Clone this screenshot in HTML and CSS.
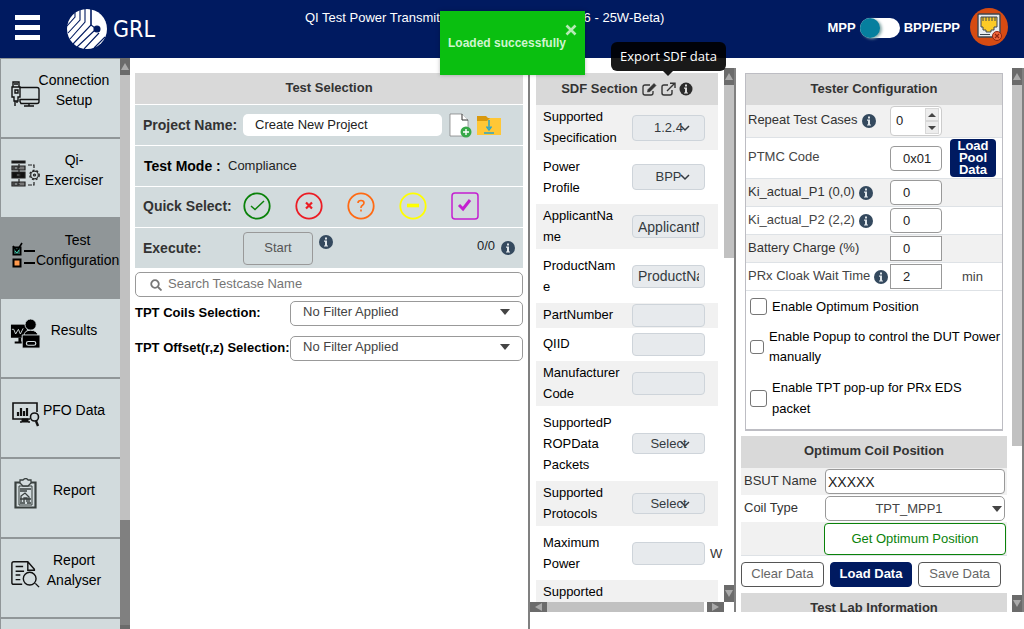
FILE: index.html
```
<!DOCTYPE html>
<html lang="en">
<head>
<meta charset="utf-8">
<title>GRL - Test Configuration</title>
<link rel="stylesheet" href="styles.css">
</head>
<body>
<svg width="0" height="0" class="defs" aria-hidden="true">
  <symbol id="info" viewBox="0 0 14 14"><circle cx="7" cy="7" r="7" fill="#34495e"/><path d="M6 2.500h2v2H6zM5 5.600h3v4.800h1v1.100H5v-1.100h1V6.700H5z" fill="#dfe6ea"/></symbol>
  <symbol id="chevron" viewBox="0 0 10 8"><path d="M1 2l4 4 4-4" fill="none" stroke="#343a40" stroke-width="1.500"/></symbol>
  <symbol id="caret" viewBox="0 0 10 6"><path d="M0 0h10L5 6z" fill="#444"/></symbol>
</svg>
<header class="topbar">
  <button class="menu" aria-label="Menu"><i></i><i></i><i></i></button>
  <div class="logo">
    <svg width="40" height="40" viewBox="0 0 40 40" aria-hidden="true">
      <circle cx="20" cy="20" r="20" fill="#fff"/>
      <g fill="none" stroke="#001a60" stroke-width="1.100"><path d="M8 3v5L0 17M13 1v10L1 24M18 0v13L3 30M24 0v16L6 35M28 21L10 38M32 24L17 40M38 28L27 39"/><path d="M24 0v16l4 3"/><circle cx="30" cy="20" r="3" fill="#001a60"/></g>
    </svg>
    <span class="logo-text">GRL</span>
  </div>
  <div class="app-title">QI Test Power Transmitter (GRL-C3) Version : 1.6 - 25W-Beta)</div>
  <div class="mode"><span>MPP</span><button class="toggle" role="switch" aria-checked="false" aria-label="MPP or BPP/EPP"><i></i></button><span>BPP/EPP</span></div>
  <svg class="lan" width="38" height="38" viewBox="0 0 38 38" role="img" aria-label="Disconnected"><circle cx="19" cy="19" r="19" fill="#d64b12"/><rect x="8" y="6" width="22" height="23" rx="1" fill="#e9edf0" stroke="#3c4650" stroke-width="1.400"/><path d="M11 9h16v10h-3v3h-3v2h-5v-2h-3v-3h-2z" fill="#fccb25" stroke="#3c4650"/><path d="M13 9v4M16 9v4M19 9v4M22 9v4M25 9v4" stroke="#3c4650"/><path d="M10 26.500h10" stroke="#3c4650"/><circle cx="27" cy="28" r="4.500" fill="#f2683c" stroke="#8c2410"/><path d="M25 26l4 4M29 26l-4 4" stroke="#8c2410" stroke-width="1.200"/></svg>
</header>
<div class="body">
  <nav class="sidebar">
    <a class="nav" href="#connection"><svg width="30" height="28" viewBox="0 0 30 28" fill="none" stroke="#111" stroke-width="1.400"><path d="M2 7h8v10H8v4H4v-4H2zM3 7V2h6v5M4 4h4M5 10h3v3H5zM5 21v5M7 21v2"/><path d="M10 7.500h17q2 0 2 2v12q0 2-2 2H11l-1-2v-2h19M19 23v3M14 26h10"/></svg><span>Connection Setup</span></a>
    <a class="nav" href="#exerciser"><svg width="30" height="28" viewBox="0 0 30 28" fill="none" stroke="#222" stroke-width="1.200"><path d="M2 1h13v2H2zM2 12h13v6H2z" fill="#111"/><path d="M2 6h13v4H2zM2 22h13v4H2z" fill="#777"/><path d="M4 7h4v2H4zM4 23h4v2H4zM7 14h3v2H7z" fill="#d2dbdd"/><path d="M9 4v21M18 5h6v4M18 25h6v-4" stroke-dasharray="4 1"/><circle cx="24.500" cy="15" r="3.800"/><circle cx="24.500" cy="15" r="4.800" stroke-dasharray="2 2"/><circle cx="24.500" cy="15" r="1"/></svg><span>Qi-Exerciser</span></a>
    <a class="nav active" href="#test" aria-current="page"><svg width="30" height="28" viewBox="0 0 30 28"><path d="M3.500 7.500h7v7h-7zM3.500 19.500h7v7h-7z" fill="#ff9a4d" stroke="#000" stroke-width="2"/><path d="M4 8h6v6H4z" fill="#274f49"/><path d="M3 6l4 5 5-8" stroke="#000" stroke-width="1.600" fill="none"/><path d="M5 11l2 2 2-3" stroke="#3bd0b0" fill="none"/><path d="M14 11h11M14 23h11" stroke="#000" stroke-width="1.800"/></svg><span>Test Configuration</span></a>
    <a class="nav" href="#results"><svg width="32" height="32" viewBox="0 0 32 32"><path d="M1 6h17v14H1z"/><path d="M9 20h3v4h3v2H5v-2h4z"/><path d="M2 11h2l2 5 3-5 2 5 3-6" stroke="#cdd6d8" fill="none"/><g stroke="#d2dbdd"><circle cx="22" cy="6" r="6"/><path d="M15 18q0-6 7-6t8 6z"/><path d="M13 17h19v14H13z"/></g><rect x="17.500" y="24" width="10" height="4" rx="2" fill="none" stroke="#d2dbdd" stroke-width="1.300"/></svg><span>Results</span></a>
    <a class="nav" href="#pfo"><svg width="30" height="28" viewBox="0 0 30 28" fill="none" stroke="#111" stroke-width="1.600"><path d="M20 19H3V3h24v9"/><path d="M8 16v-4M11 16V8M14 16v-5M17 16V8" stroke-width="2.200"/><path d="M12 19h6v3h2H10h2z" fill="#111" stroke-width="1"/><circle cx="24.500" cy="17" r="4"/><path d="M26 21l2 5" stroke-width="2.400"/></svg><span>PFO Data</span></a>
    <a class="nav" href="#report"><svg width="30" height="32" viewBox="0 0 30 32" fill="none" stroke="#39403f"><path d="M5.500 4.500h20v25h-20z" stroke-width="2.200"/><path d="M9 8h13v19H9z"/><path d="M10 2h3q3-3 5 0h3v3l-3 3h-5l-3-3z" fill="#d2dbdd" stroke-width="1.300"/><path d="M10 11h11M10 13h7M11 24V18l4-3 4 4v5M14 24v-4h3v4M10 21h11M10 25h5M17 25h4" stroke-width="1.300"/></svg><span>Report</span></a>
    <a class="nav" href="#analyser"><svg width="32" height="30" viewBox="0 0 32 30" fill="none" stroke="#111" stroke-width="1.500"><path d="M13 26H4q-2 0-2-2V4q0-2 2-2h15l7 8v1h-7V2M6 7h8M6 12h9M6 16h5M6 21h5"/><circle cx="21" cy="20" r="6.800"/><path d="M27 25l4 4"/></svg><span>Report Analyser</span></a>
    <a class="nav" href="#more" aria-label="More"></a>
  </nav>
  <div class="vbar side-bar" aria-hidden="true"><i class="arr up"></i><i class="thumb"></i><i class="rest"></i><i class="arr down"></i></div>

  <main class="tests">
    <section class="panel">
      <h2>Test Selection</h2>
      <div class="prow"><label class="plabel" for="project">Project Name:</label><input id="project" class="project" value="Create New Project">
        <button class="bare" aria-label="New project"><svg width="23" height="25" viewBox="0 0 23 25"><path d="M1 1h12l6 6v16H1z" fill="#fff" stroke="#777" stroke-width=".7"/><path d="M13 1v6h6" fill="#fff" stroke="#333"/><circle cx="17" cy="19" r="5.500" fill="#37a849"/><path d="M17 16v6M14 19h6" stroke="#fff" stroke-width="1.400"/></svg></button>
        <button class="bare folder" aria-label="Load project"><svg width="24" height="21" viewBox="0 0 24 21"><path d="M0 1h9l2 2h13v5H0z" fill="#d9980d"/><path d="M0 6h10l3-3h11v17H0z" fill="#ffc736"/><path d="M12 5v8M9.500 11.500L12 15l2.500-3.500M7 18h10" fill="none" stroke="#2aa5c9" stroke-width="1.500"/></svg></button></div>
      <div class="prow"><span class="plabel black">Test Mode :</span><span class="mode-value">Compliance</span></div>
      <div class="prow quick"><span class="plabel">Quick Select:</span>
        <button class="bare" aria-label="Passed"><svg width="28" height="28" viewBox="0 0 28 28" fill="none" stroke="#0a820a"><circle cx="14" cy="14" r="12.700" stroke-width="1.800"/><path d="M8 14l4 3.500L21 9" stroke-width="1.500"/></svg></button>
        <button class="bare" aria-label="Failed"><svg width="28" height="28" viewBox="0 0 28 28" fill="none" stroke="#ec1c24"><circle cx="14" cy="14" r="12.700" stroke-width="1.800"/><path d="M11 10.500l6 6M17 10.500l-6 6" stroke-width="2.200"/></svg></button>
        <button class="bare" aria-label="Inconclusive"><svg width="28" height="28" viewBox="0 0 28 28" fill="none" stroke="#ff6a13"><circle cx="14" cy="14" r="12.700" stroke-width="1.800"/><path d="M11 11q0-2.500 3-2.500t3 2.500q0 1.300-1.500 2.200T14 15.500v.5M14 17.500v2" stroke-width="1.600"/></svg></button>
        <button class="bare" aria-label="Not run"><svg width="28" height="28" viewBox="0 0 28 28" fill="none" stroke="#ff0"><circle cx="14" cy="14" r="12.700" stroke-width="1.800"/><path d="M8 13.500h12" stroke-width="3.600"/></svg></button>
        <button class="bare" aria-label="All"><svg width="28" height="28" viewBox="0 0 28 28" fill="none" stroke="#c41fd0"><rect x="1" y="1" width="26" height="26" rx="3" stroke-width="1.500"/><path d="M8 13l4 4 7-9" stroke-width="3"/></svg></button></div>
      <div class="prow"><span class="plabel">Execute:</span><button class="start">Start</button><svg class="info raise"><use href="#info"/></svg><span class="count">0/0</span><svg class="info"><use href="#info"/></svg></div>
    </section>
    <label class="search"><svg width="12" height="12" viewBox="0 0 12 12" fill="none" stroke="#777" stroke-width="1.800"><circle cx="5" cy="5" r="3.800"/><path d="M8 8l3.500 3.500"/></svg><input type="search" placeholder="Search Testcase Name" aria-label="Search Testcase Name"></label>
    <div class="filter"><label for="coils">TPT Coils Selection:</label><span class="dd"><select id="coils"><option>No Filter Applied</option></select><svg width="10" height="6"><use href="#caret"/></svg></span></div>
    <div class="filter"><label for="offset">TPT Offset(r,z) Selection:</label><span class="dd"><select id="offset"><option>No Filter Applied</option></select><svg width="10" height="6"><use href="#caret"/></svg></span></div>
  </main>

  <section class="sdf">
    <div class="scroll-row">
      <div class="sdf-view">
        <div class="sdf-table">
          <h2>SDF Section
            <button class="bare" aria-label="Edit SDF data"><svg width="16" height="14" viewBox="0 0 16 14" fill="none" stroke="#333" stroke-width="1.300"><path d="M9 3H4Q2 3 2 5v6q0 2 2 2h6q2 0 2-2V9"/><path d="M6.500 10l.5-2.500 6-6 2 2-6 6z" fill="#333" stroke-width=".6"/></svg></button>
            <button class="bare" aria-label="Export SDF data"><svg width="16" height="14" viewBox="0 0 16 14" fill="none" stroke="#333" stroke-width="1.400"><path d="M8 3H4Q2 3 2 5v6q0 2 2 2h6q2 0 2-2V8M7 9l7-7M10 1.200h5V6" /></svg></button>
            <svg width="14" height="14" viewBox="0 0 14 14"><circle cx="7" cy="7" r="6.500" fill="#2b2b2b"/><path d="M6 2.500h2v2H6zM5 5.600h3v4.800h1v1.100H5v-1.100h1V6.700H5z" fill="#ddd"/></svg>
          </h2>
          <div class="srow"><label for="s1">Supported Specification</label><span class="pick mid"><select id="s1"><option>1.2.4</option></select><svg width="10" height="8"><use href="#chevron"/></svg></span></div>
          <div class="srow tall"><label for="s2">Power<br>Profile</label><span class="pick mid"><select id="s2"><option>BPP</option></select><svg width="10" height="8"><use href="#chevron"/></svg></span></div>
          <div class="srow"><label for="s3">ApplicantName</label><input id="s3" value="ApplicantName"></div>
          <div class="srow tall"><label for="s4">ProductName</label><input id="s4" value="ProductName"></div>
          <div class="srow one"><label for="s5">PartNumber</label><input id="s5"></div>
          <div class="srow one even"><label for="s6">QIID</label><input id="s6"></div>
          <div class="srow"><label for="s7">Manufacturer Code</label><input id="s7"></div>
          <div class="srow tall"><label for="s8">SupportedPROPData Packets</label><span class="pick"><select id="s8"><option>Select</option></select><svg width="10" height="8"><use href="#chevron"/></svg></span></div>
          <div class="srow"><label for="s9">Supported Protocols</label><span class="pick"><select id="s9"><option>Select</option></select><svg width="10" height="8"><use href="#chevron"/></svg></span></div>
          <div class="srow tall"><label for="s10">Maximum Power</label><input id="s10"><span class="unit">W</span></div>
          <div class="srow"><span class="lab">Supported</span></div>
        </div>
      </div>
      <div class="vbar sdf-bar" aria-hidden="true"><i class="arr up"></i><i class="thumb"></i><i class="rest"></i><i class="arr down"></i></div>
    </div>
    <div class="hbar" aria-hidden="true"><i class="arr left"></i><i class="thumb"></i><i class="arr right"></i></div>
  </section>

  <section class="config">
    <div class="config-view">
      <div class="tester">
        <h2>Tester Configuration</h2>
        <div class="trow"><span class="tl"><label for="rep">Repeat Test Cases</label><svg class="info"><use href="#info"/></svg></span><span class="spin"><input id="rep" value="0"><span class="steps"><button aria-label="Increase"><svg width="8" height="4" viewBox="0 0 8 4"><path d="M0 4h8L4 0z" fill="#444"/></svg></button><button aria-label="Decrease"><svg width="8" height="4" viewBox="0 0 8 4"><path d="M0 0h8L4 4z" fill="#444"/></svg></button></span></span></div>
        <div class="trow"><span class="tl"><label for="ptmc">PTMC Code</label></span><input id="ptmc" value="0x01"><button class="pool">Load Pool Data</button></div>
        <div class="trow"><span class="tl"><label for="k1">Ki_actual_P1 (0,0)</label><svg class="info"><use href="#info"/></svg></span><input id="k1" value="0"></div>
        <div class="trow"><span class="tl"><label for="k2">Ki_actual_P2 (2,2)</label><svg class="info"><use href="#info"/></svg></span><input id="k2" value="0"></div>
        <div class="trow"><span class="tl"><label for="bat">Battery Charge (%)</label></span><input id="bat" class="square" value="0"></div>
        <div class="trow"><span class="tl"><label for="prx">PRx Cloak Wait Time</label><svg class="info"><use href="#info"/></svg></span><input id="prx" class="square" value="2"><span class="min">min</span></div>
        <div class="checks">
          <label><input type="checkbox"><span>Enable Optimum Position</span></label>
          <label class="small"><input type="checkbox"><span>Enable Popup to control the DUT Power manually</span></label>
          <label><input type="checkbox"><span>Enable TPT pop-up for PRx EDS packet</span></label>
        </div>
      </div>
      <div class="coil">
        <h2>Optimum Coil Position</h2>
        <div class="crow"><label for="bsut">BSUT Name</label><input id="bsut" value="XXXXX"></div>
        <div class="crow"><label for="ctype">Coil Type</label><span class="dd"><select id="ctype"><option>TPT_MPP1</option></select><svg width="10" height="6"><use href="#caret"/></svg></span></div>
        <div class="crow last"><button class="get">Get Optimum Position</button></div>
      </div>
      <div class="actions"><button>Clear Data</button><button class="primary">Load Data</button><button>Save Data</button></div>
      <h2>Test Lab Information</h2>
    </div>
    <div class="vbar config-bar" aria-hidden="true"><i class="arr up"></i><i class="thumb"></i><i class="rest"></i><i class="arr down"></i></div>
  </section>
</div>
<div class="toast" role="status"><span>Loaded successfully</span><button aria-label="Close"><svg width="12" height="12" viewBox="0 0 12 12"><path d="M1.500 1.500l9 9M10.500 1.500l-9 9" stroke="#b5eab5" stroke-width="2.600"/></svg></button></div>
<div class="tooltip" role="tooltip">Export SDF data</div>
</body>
</html>
```

FILE: styles.css
```
* { box-sizing: border-box; }
body { margin: 0; height: 100vh; overflow: hidden; display: flex; flex-direction: column; background: #fff; color: #212529; font: 13px/20px "Liberation Sans", Arial, sans-serif; }
input, select, button { font: inherit; color: inherit; margin: 0; padding: 0; }
select { appearance: none; }
h2 { margin: 0; height: 31px; background: #d9d9d9; color: #333; font-size: 13px; line-height: 30px; font-weight: bold; text-align: center; }
svg { display: block; flex: none; }
.defs { position: absolute; }
.bare { border: 0; background: none; }
.info { width: 14px; height: 14px; }

.topbar { height: 58px; flex: none; display: flex; align-items: flex-start; background: #001a60; color: #fff; padding: 8px 16px 0 15px; }
.menu { width: 25px; border: 0; background: none; display: grid; gap: 5px; margin: 7px 27px 0 0; }
.menu i { height: 5px; background: #fff; }
.logo { display: flex; align-items: center; gap: 6px; padding-top: 1px; }
.logo-text { font: 23px/40px "Liberation Sans Narrow", "DejaVu Sans Condensed", sans-serif; width: 42px; }
.app-title { margin-left: 150px; white-space: nowrap; }
.mode { margin-left: auto; display: flex; align-items: center; gap: 4px; font-weight: bold; padding-top: 10px; }
.toggle { width: 40px; height: 20px; border: 0; border-radius: 10px; background: #fff; }
.toggle i { display: block; width: 20px; height: 20px; border-radius: 10px; background: #067f9e; box-shadow: 2px 1px 3px #8aa; }
.lan { margin-left: 10px; }

.body { flex: 1; min-height: 0; display: flex; }
.sidebar { width: 120px; flex: none; overflow: hidden; border-top: 1px solid #909698; border-left: 1px solid #909698; }
.nav { display: flex; height: 80px; padding: 11px 0 0 9px; border-bottom: 2px solid #909698; background: #d2dbdd; color: #000; font-size: 14px; text-decoration: none; }
.nav.active { background: #909698; }
.nav svg { width: 30px; height: 32px; margin-top: 8px; margin-right: -4px; }
.nav span { width: 76px; height: 40px; display: grid; align-content: center; text-align: center; }

.vbar { width: 10px; flex: none; display: flex; flex-direction: column; }
.arr { flex: none; width: 10px; height: 17px; background: #6b6b6b; display: grid; place-content: center; }
.arr::before { content: ""; border: 4px solid transparent; }
.up::before { border-top: 0; border-bottom: 7px solid #aaa; }
.down::before { border-bottom: 0; border-top: 7px solid #aaa; }
.left::before { border-left: 0; border-right: 7px solid #aaa; }
.right::before { border-right: 0; border-left: 7px solid #aaa; }
.thumb { background: #c1c1c1; }
.rest { flex: 1; }
.side-bar .thumb { flex: 0 0 78%; }
.side-bar .rest { background: #808080; }
.side-bar .down { height: 4px; }
.side-bar .down::before { display: none; }
.sdf-bar .thumb { flex: 0 0 173px; }
.config-bar .thumb { flex: 0 0 361px; }

.tests { flex: 1; min-width: 0; padding: 15px 5px 0; }
.panel { display: grid; gap: 1px; }
.prow { height: 40px; display: flex; align-items: center; padding: 0 8px; background: #d2dbdd; }
.plabel { width: 100px; flex: none; color: #333; font-size: 14px; font-weight: bold; white-space: nowrap; }
.plabel.black { width: 85px; padding-left: 1px; color: #000; }
.mode-value { color: #222; }
.project { width: 199px; height: 22px; border: 0; border-radius: 5px; padding: 0 12px 2px; margin-right: 7px; background: #fff; color: #222; }
.folder { margin-left: 5px; }
.quick { padding-bottom: 2px; }
.quick .bare { margin-right: 24px; }
.start { width: 70px; height: 33px; border: 1px solid #999; border-radius: 4px; background: #d2dbdd; color: #555; margin-right: 6px; }
.raise { margin-bottom: 12px; }
.count { margin-left: auto; margin-right: 6px; padding-bottom: 4px; }
.search { display: flex; align-items: center; gap: 6px; height: 25px; margin-top: 4px; padding: 0 14px; border: 1px solid #999; border-radius: 5px; }
.search input { flex: 1; min-width: 0; border: 0; outline: 0; background: none; padding-bottom: 2px; }
.search input::placeholder { color: #757575; }
.filter { display: flex; align-items: center; height: 25px; margin-top: 4px; color: #000; font-weight: bold; }
.filter + .filter { margin-top: 10px; }
.filter label { width: 155px; flex: none; white-space: nowrap; padding-bottom: 2px; }
.dd { position: relative; flex: 1; font-weight: normal; color: #444; }
.dd select { display: block; width: 100%; height: 25px; padding: 0 12px 4px; border: 1px solid #999; border-radius: 5px; background: #fff; }
.dd svg { position: absolute; right: 13px; top: 8px; }

.sdf { width: 206px; flex: none; display: flex; flex-direction: column; border-left: 2px solid #808080; }
.scroll-row { flex: 1; min-height: 0; display: flex; margin-top: 10px; }
.sdf-view { flex: 1; min-width: 0; overflow: hidden; padding: 5px 0 0 6px; }
.sdf-table { width: 182px; color: #000; }
.sdf h2 { height: 32px; display: flex; align-items: center; justify-content: center; gap: 3px; }
.sdf h2 .bare { width: 16px; }
.srow { display: flex; align-items: center; height: 45px; padding-left: 7px; line-height: 21px; background: #f1f1f1; }
.srow.tall { height: auto; min-height: 54px; background: #fff; padding-top: 6px; padding-bottom: 6px; }
.srow.one { height: 25px; }
.srow.even { height: 33px; background: #fff; }
.srow label, .lab { width: 77px; margin-right: 12px; padding-bottom: 2px; flex: none; overflow-wrap: break-word; }
.srow.tall label { padding-bottom: 0; }
.lab { align-self: flex-start; padding-top: 1px; }
.srow input, .pick select { display: block; width: 73px; height: 23px; border: 1px solid #ced4da; border-radius: 4px; background: #e7eaed; color: #343a40; padding: 0 5px; }
.srow input { font-size: 14px; }
.pick { position: relative; flex: none; }
.pick select { height: 21px; text-align-last: center; line-height: 19px; }
.pick.mid select { height: 26px; line-height: 24px; }
.pick svg { position: absolute; right: 15px; top: 50%; margin-top: -4px; }
.unit { margin-left: 5px; color: #333; }
.hbar { display: flex; height: 10px; margin: 0 10px 17px 0; }
.hbar .arr { width: 17px; height: 10px; }
.hbar .thumb { flex: 1; margin-right: 3px; }

.config { flex: none; width: 290px; display: flex; margin: 10px 0 17px; border-left: 2px solid #808080; border-right: 2px solid #808080; }
.config-view { flex: 1; min-width: 0; overflow: hidden; padding: 5px 5px 0; }
.tester { border: 1px solid #bdbdc3; border-bottom-width: 2px; margin: 0 4px; }
.trow { display: flex; align-items: center; height: 28px; padding-left: 2px; border-bottom: 1px solid #dee2e6; color: #444; }
.trow:nth-child(even) { background: #f1f1f1; color: #333; }
.trow:nth-child(2) { height: 33px; }
.trow:nth-child(3) { height: 41px; }
.tl { width: 142px; flex: none; display: flex; align-items: center; gap: 4px; white-space: nowrap; }
.tl label { padding-bottom: 2px; }
.trow > input { width: 52px; height: 25px; border: 1px solid #999; border-radius: 4px; background: #fff; color: #222; padding: 0 6px 0 12px; }
.trow > input.square { border-radius: 0; }
.spin { display: flex; align-items: center; width: 52px; height: 30px; padding: 0 2px 0 5px; border: 1px solid #ccc; border-radius: 4px; background: #fff; }
.spin input { flex: 1; min-width: 0; border: 0; background: none; color: #222; }
.steps { display: grid; width: 14px; }
.steps button { height: 13px; border: 1px solid #d8d8d8; background: #ededed; display: grid; place-content: center; }
.pool { width: 46px; height: 38px; margin-left: 8px; border: 0; border-radius: 4px; background: #001a60; color: #fff; font-weight: bold; line-height: 12px; }
.min { margin-left: 20px; }
.checks { display: grid; gap: 10px; padding: 5px 0 10px 4px; color: #000; }
.checks label { display: flex; align-items: center; gap: 5px; line-height: 21px; }
.checks .small { line-height: 20px; }
.checks input { appearance: none; flex: none; width: 17px; height: 17px; border: 1px solid #767676; border-radius: 3px; background: #fff; }
.checks .small input { width: 14px; height: 14px; }

.coil { margin-top: 5px; border-bottom: 1px solid #dee2e6; }
.coil h2 { height: 32px; }
.crow { display: flex; align-items: center; height: 27px; padding: 0 2px 0 3px; background: #f1f1f1; color: #333; }
.crow:nth-child(odd) { background: #fff; }
.crow label { width: 81px; flex: none; padding-bottom: 2px; }
.crow input { flex: 1; min-width: 0; height: 25px; border: 1px solid #999; border-radius: 4px; padding: 0 2px; background: #fff; color: #222; font-size: 14px; }
.crow .dd select { padding: 0 24px 0 12px; text-align-last: center; }
.crow .dd svg { right: 3px; top: 10px; }
.crow.last { height: 33px; padding: 0 1px; justify-content: flex-end; background: #f1f1f1; }
.get { width: 182px; height: 32px; border: 1px solid #0a820a; border-radius: 4px; background: #fff; color: #0a820a; }
.actions { display: flex; gap: 6px; margin: 6px 0; padding-right: 6px; }
.actions button { flex: 1; height: 25px; border: 1px solid #555; border-radius: 4px; background: #fff; color: #666; padding-bottom: 2px; }
.actions .primary { border-color: #001a60; background: #001a60; color: #fff; font-weight: bold; }

.toast { position: absolute; left: 440px; top: 11px; width: 145px; height: 64px; display: flex; padding: 0 8px; align-items: center; background: #0abf10; color: #cff5cf; font-weight: bold; font-size: 12px; white-space: nowrap; box-shadow: 0 0 4px #0004; }
.toast button { position: absolute; right: 8px; top: 13px; border: 0; background: none; }
.tooltip { position: absolute; left: 611px; top: 42px; width: 115px; height: 29px; border-radius: 6px; background: #000000e6; color: #fff; font: 13px/29px "Open Sans", sans-serif; text-align: center; }
.tooltip::after { content: ""; position: absolute; left: 52px; top: 29px; border: 5px solid transparent; border-top-color: #191919; border-bottom: 0; }
```
